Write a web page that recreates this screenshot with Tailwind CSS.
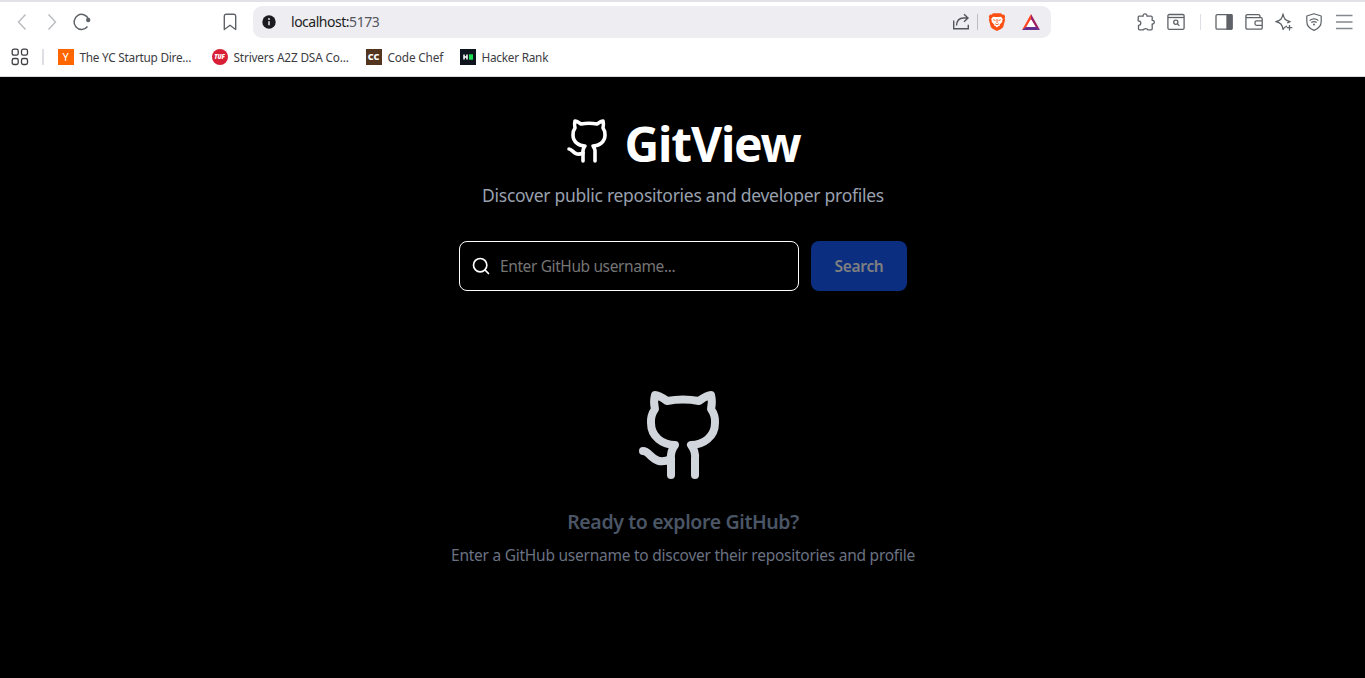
<!DOCTYPE html>
<html lang="en">
<head>
<meta charset="utf-8">
<title>GitView</title>
<script src="https://cdn.jsdelivr.net/npm/@tailwindcss/browser@4"></script>
</head>
<body class="h-[678px] w-[1365px] overflow-hidden bg-black font-['Segoe_UI','Noto_Sans',sans-serif]">
<svg class="hidden">
  <symbol id="cat" viewBox="0 0 24 24" fill="none" stroke="currentColor" stroke-linecap="round" stroke-linejoin="round">
    <path d="M15 22v-4a4.8 4.8 0 0 0-1-3.5c3 0 6-2 6-5.5.08-1.25-.27-2.48-1-3.5.28-1.15.28-2.35 0-3.5 0 0-1 0-3 1.5-2.64-.5-5.36-.5-8 0C6 2 5 2 5 2c-.3 1.15-.3 2.35 0 3.5A5.403 5.403 0 0 0 4 9c0 3.5 3 5.5 6 5.5-.39.49-.68 1.05-.85 1.65-.17.6-.22 1.23-.15 1.85v4"/><path d="M9 18c-4.51 2-5-2-7-2"/>
  </symbol>
</svg>
<header class="h-[77px] border-t-2 border-b border-t-[#e2e1e8] border-b-[#dddce3] bg-white text-[#5f6368]">
  <div class="flex h-10 items-center">
    <div class="ml-3 flex items-center gap-2.5">
      <svg class="size-5 text-[#b9bbbf]" viewBox="0 0 20 20" fill="none" stroke="currentColor" stroke-width="1.4"><path d="M13.5 2.5 6.500 10l7 7.500"/></svg>
      <svg class="size-5 text-[#b9bbbf]" viewBox="0 0 20 20" fill="none" stroke="currentColor" stroke-width="1.4"><path d="M6.500 2.500l7 7.500-7 7.500"/></svg>
      <svg class="size-5" viewBox="0 0 20 20" fill="none" stroke="currentColor" stroke-width="1.5"><path d="M16.500 7A7.500 7.500 0 1 0 15.500 14.500"/><circle cx="16.200" cy="8" r="2.200" fill="currentColor" stroke="none"/></svg>
    </div>
    <svg class="ml-[128px] size-5" viewBox="0 0 20 20" fill="none" stroke="currentColor" stroke-width="1.400" stroke-linejoin="round"><path d="M4.300 4Q4.300 2.200 6 2.200h8q1.700 0 1.700 1.800v13.500L10 13.300l-5.700 4.200z"/></svg>
    <div class="ml-[13px] flex h-8 w-[798px] items-center rounded-[9px] bg-[#ededf2]">
      <svg class="ml-[9px] size-[14px]" viewBox="0 0 14 14"><circle cx="7" cy="7" r="6.700" fill="#1b1b20"/><path d="M7 6.200v4" stroke="#ededf2" stroke-width="1.500"/><circle cx="7" cy="4" r=".9" fill="#ededf2"/></svg>
      <span class="ml-[15px] text-[14px] leading-5 tracking-[-0.48px] text-[#1d1d22]">localhost:<span class="text-[#55555e]">5173</span></span>
      <svg class="ml-auto size-[18px]" viewBox="0 0 18 18" fill="none" stroke="#55565c" stroke-width="1.400"><path d="M1.700 7.500v8.300h14.600v-4"/><path d="M4.500 12.500Q5 5 11.500 5h4.500M12 1.300l4 3.700-4 3.700"/></svg>
      <div class="ml-[7px] h-4 w-px bg-[#bdbdc4]"></div>
      <svg class="ml-[10px] h-[18px] w-[18px]" viewBox="0 0 18 18"><path fill="#fb4f13" d="M5 .2h8l1.300 1.500 1.700-.1 1.200 1.900-.6 1.700.5 1.800-2 7.200L13 16l-4 2-4-2-2.100-1.800L.9 7l.5-1.800-.6-1.700L2 1.600l1.700.1z"/><path fill="#fff" d="m5 3.700 2.500.4h3l2.500-.4 2 2.600-.8 1 .2 1.500-2.800 3 .3 1-1.300.3L9 14.500l-1.600-1.400-1.300-.3.300-1-2.800-3 .2-1.500-.8-1z"/><path fill="none" stroke="#fb4f13" stroke-width=".9" d="m5.300 6.700 2.200.9M12.700 6.700l-2.200.9M9 6v4M7.200 10.800 9 11.700l1.800-.9"/></svg>
      <svg class="mr-[11px] ml-[16px] size-[18px]" viewBox="0 0 18 18"><path fill="#ff4724" d="M9 1 0 17l4-2.300L9 6.200z"/><path fill="#9e1f63" d="m9 1 9 16-4-2.300L9 6.200z"/><path fill="#662d91" d="M0 17h18l-4-3H4z"/><path fill="#fff" d="m9 6.200 4.600 7.800H4.400z"/></svg>
    </div>
    <div class="mr-3 ml-auto flex items-center">
      <svg class="size-[18px]" viewBox="0 0 18 18" fill="none" stroke="currentColor" stroke-width="1.300" stroke-linejoin="round"><path d="M2 3.200h4.200C5.800 1.500 7 .8 8 .8s2.300.7 1.900 2.400h4.300q1 0 1 1v3.200c1.300-.2 2.100.7 2.100 1.800s-.8 2-2.100 1.800v4.800q0 1-1 1h-3.500c0-.7-.9-1.100-2.200-1.100s-2 .4-2 1.100H2.500q-1 0-1-1v-3.500c1.400 0 2.300-.9 2.300-2.200S2.900 7.800 1.200 7.800V4.200q0-1 .8-1z"/></svg>
      <svg class="ml-3 size-[18px]" viewBox="0 0 18 18" fill="none" stroke="currentColor" stroke-width="1.300"><rect x=".9" y="1.500" width="16.200" height="14.800" rx="1.300"/><path d="M1 4.500h16"/><circle cx="8.800" cy="9.300" r="2.100"/><path d="m10.400 10.900 2 2"/></svg>
      <div class="ml-[15px] h-4 w-[1.500px] bg-[#dedfe4]"></div>
      <svg class="ml-[14px] size-[18px]" viewBox="0 0 18 18" fill="none" stroke="currentColor" stroke-width="1.300"><rect x="1" y="1.700" width="16" height="14.500" rx="1.300"/><path fill="currentColor" d="M12 1.700h4.500q.5 0 .5.500v13.500q0 .5-.5.500H12z"/></svg>
      <svg class="ml-3 size-[18px]" viewBox="0 0 18 18" fill="none" stroke="currentColor" stroke-width="1.300"><path d="M15 4.500V3.300q0-1.600-1.600-1.600H2.500q-1.600 0-1.600 1.500t1.600 1.500H16q1.200 0 1.200 1.200v9q0 1.300-1.200 1.300H2.500q-1.600 0-1.600-1.600V3"/><path d="M17 7.800h-5.500q-1.500 0-1.500 1.500v1.500q0 1.500 1.500 1.500H17"/></svg>
      <svg class="ml-3 size-[18px]" viewBox="0 0 18 18" fill="none" stroke="currentColor" stroke-width="1.300" stroke-linejoin="round"><path d="M12 13.200c-2.600.8-3.200 1.500-4 3.200C7.100 11.500 5.600 9.600.8 8.600 5.600 7.600 7.100 5.800 8 1c.9 4.800 2.300 6.600 7.200 7.600-1.200.4-2.200.8-3 1.400M14.500 12v5.500M11.800 14.700h5.500"/></svg>
      <svg class="ml-3 size-[18px]" viewBox="0 0 18 18" fill="none" stroke="currentColor" stroke-width="1.200" stroke-linejoin="round"><path d="M9 .8 16.200 3v5.500c0 4.300-2.800 7.200-7.200 8.900-4.400-1.700-7.200-4.600-7.200-8.900V3z"/><path d="M4.600 7.400q4.400-3.200 8.800 0M6.300 9.600q2.700-1.800 5.400 0"/><circle cx="9" cy="11.500" r="1" fill="currentColor" stroke="none"/></svg>
      <svg class="ml-3 h-[18px] w-[18px] text-[#85888d]" viewBox="0 0 18 18" stroke="currentColor" stroke-width="1.400"><path d="M1 2.500h16.500M1 9h16.500M1 15.500h16.500"/></svg>
    </div>
  </div>
  <nav class="flex h-[30px] items-center text-[11.800px] leading-4 text-[#3c3d42]">
    <svg class="ml-[11px] size-[18px]" viewBox="0 0 18 18" fill="none" stroke="currentColor" stroke-width="1.300"><rect x="1.200" y="1.200" width="6" height="6" rx="1.800"/><rect x="10.500" y="1.200" width="6" height="6" rx="1.800"/><rect x="1.200" y="10.500" width="6" height="6" rx="1.800"/><rect x="10.500" y="10.500" width="6" height="6" rx="1.800"/></svg>
    <div class="ml-[13px] h-4 w-[1.500px] bg-[#dedfe4]"></div>
    <div class="ml-[14px] flex w-[154px] items-center gap-1.5"><span class="flex size-4 items-center justify-center bg-[#ff6600] text-[11px] text-white">Y</span><span class="tracking-[-0.250px] whitespace-nowrap">The YC Startup Dire...</span></div>
    <div class="flex w-[154px] items-center gap-1.5"><span class="flex size-4 items-center justify-center rounded-full bg-[#d81f36] text-[6px] font-black tracking-[-0.1px] text-white italic">TUF</span><span class="tracking-[-0.160px] whitespace-nowrap">Strivers A2Z DSA Co...</span></div>
    <div class="flex w-[94px] items-center gap-1.5"><span class="flex size-4 items-center justify-center bg-[#53341f] text-[9px] font-black text-white">CC</span><span class="tracking-[-0.15px] whitespace-nowrap">Code Chef</span></div>
    <div class="flex items-center gap-1.5"><svg class="size-4" viewBox="0 0 16 16"><path fill="#0e141e" d="M0 0h16v16H0z"/><path d="M4 5.500v5M7 5.500v5M4 8h3" stroke="#fff" stroke-width="1.500"/><path fill="#1be052" d="M9 5.300h4v5.400H9z"/></svg><span class="tracking-[-0.25px] whitespace-nowrap">Hacker Rank</span></div>
  </nav>
</header>
<main class="flex flex-col items-center">
  <div class="mt-[38px] flex h-14 items-start text-white">
    <svg class="mt-0.5 size-12" stroke-width="1.8"><use href="#cat"/></svg>
    <h1 class="ml-3 pt-px text-[48px] leading-[56px] font-bold tracking-[-1.2px]">GitView</h1>
  </div>
  <p class="mt-[10px] ml-px text-[17.500px] leading-7 tracking-[-0.27px] whitespace-nowrap text-[#99a1af]">Discover public repositories and developer profiles</p>
  <form class="mt-8 ml-px flex gap-3">
    <div class="flex h-[50px] w-[340px] items-center rounded-lg border border-white pl-[11px]">
      <svg class="size-5 text-white" viewBox="0 0 24 24" fill="none" stroke="currentColor" stroke-width="2" stroke-linecap="round"><circle cx="11" cy="11" r="8"/><path d="m21 21-4.300-4.300"/></svg>
      <span class="ml-[9px] pt-0.5 text-[15.500px] tracking-[-0.39px] whitespace-nowrap text-[#757575]">Enter GitHub username...</span>
    </div>
    <div class="flex h-[50px] w-24 items-center justify-center rounded-lg bg-[#0b2e80] pt-0.5 text-[15.500px] font-semibold tracking-[-0.3px] text-[#808080]">Search</div>
  </form>
  <svg class="mt-24 ml-px size-24 text-[#d1d5dc]" stroke-width="2"><use href="#cat"/></svg>
  <h2 class="mt-[25px] ml-px text-[19.500px] leading-7 font-semibold tracking-[-0.37px] whitespace-nowrap text-[#4a5565]">Ready to explore GitHub?</h2>
  <p class="mt-[7px] ml-px text-[15.500px] leading-6 tracking-[-0.25px] whitespace-nowrap text-[#6a7282]">Enter a GitHub username to discover their repositories and profile</p>
</main>
</body>
</html>
